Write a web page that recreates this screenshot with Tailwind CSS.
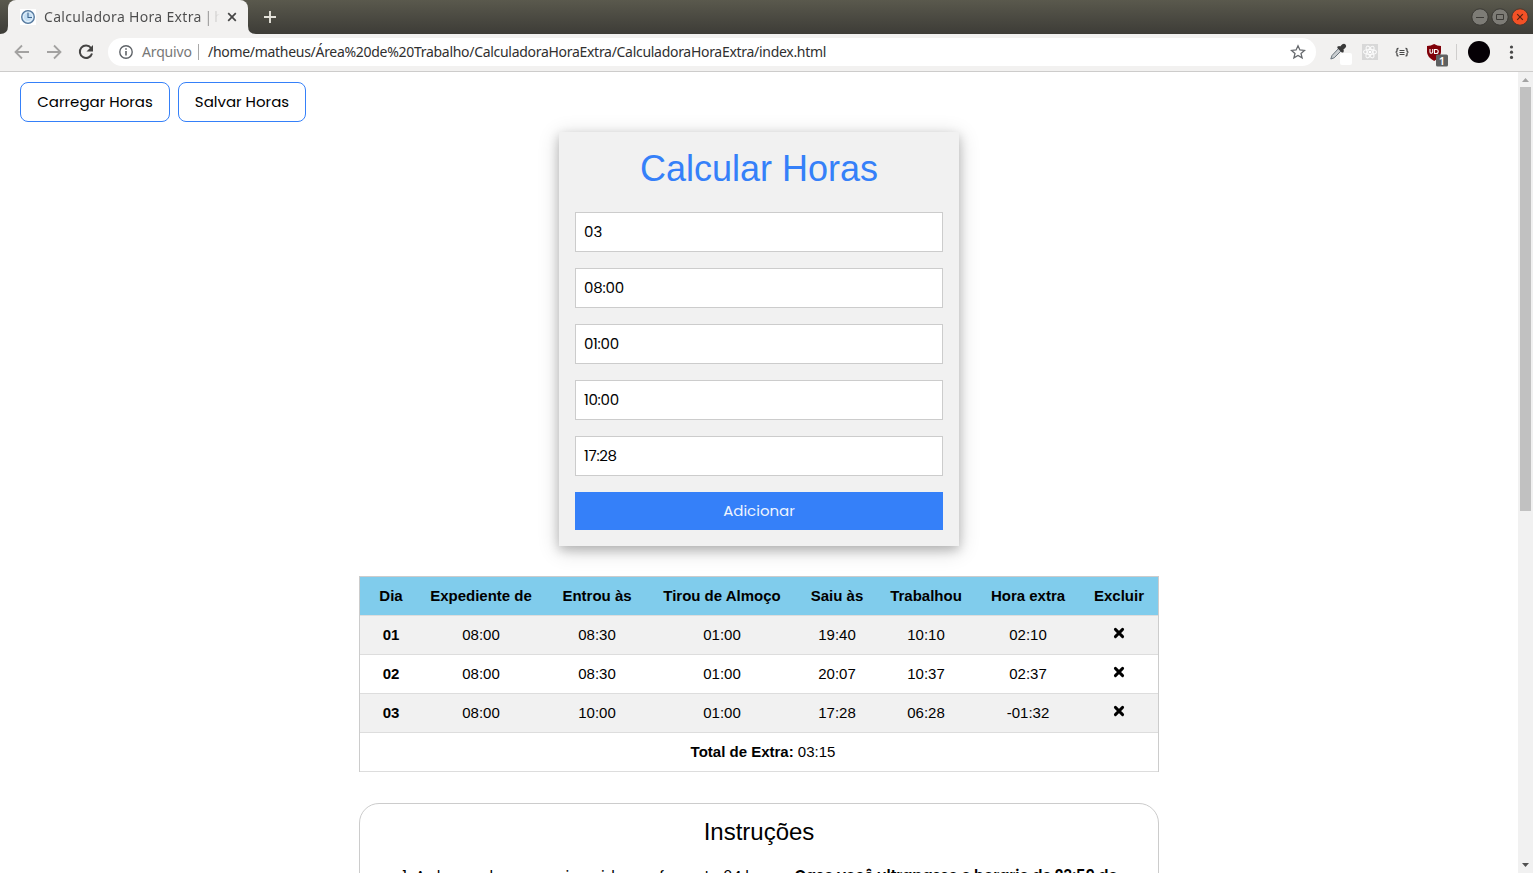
<!DOCTYPE html>
<html lang="pt-BR">
<head>
<meta charset="utf-8">
<title>Calculadora Hora Extra</title>
<script src="https://cdn.jsdelivr.net/npm/@tailwindcss/browser@4"></script>
</head>
<body class="flex h-[873px] w-[1533px] flex-col overflow-hidden bg-white font-['Liberation_Sans',sans-serif] text-[15px] leading-[22.5px] text-black">

<!-- Tab strip -->
<header class="flex h-[34px] shrink-0 justify-between bg-linear-to-b from-[#5a594d] to-[#3d3c37]">
  <div class="flex">
    <div class="flex w-2 items-end bg-transparent"><svg class="size-2" viewBox="0 0 8 8"><path d="M8 0v8H0Q8 8 8 0z" fill="#f2f1f0"/></svg></div>
    <div class="flex w-[240px] items-center rounded-t-lg bg-[#f2f1f0] pl-3">
      <svg class="size-4 shrink-0" viewBox="0 0 16 16"><path fill="#fff" d="M0 0h16v16H0z"/><circle cx="8" cy="8" r="6.3" fill="#c4def3" stroke="#54779c" stroke-width="1.3"/><circle cx="8" cy="8" r="4.6" fill="none" stroke="#e6f2fb" stroke-width="1"/><path d="M8 3.5V8.5h4" fill="none" stroke="#3f668f" stroke-width="1.1"/></svg>
      <div class="ml-2 w-[176px] overflow-hidden whitespace-nowrap bg-linear-to-r from-[#4c4c4c] from-88% to-transparent bg-clip-text font-['Noto_Sans',sans-serif] text-[14px] tracking-[0.32px] text-transparent">Calculadora Hora Extra<span class="tracking-[-0.8px]"> | h</span></div>
      <svg class="ml-[7px] size-[10px] shrink-0" viewBox="0 0 10 10"><path d="M1.2 1.2l7.6 7.6M8.800 1.200L1.200 8.800" stroke="#454545" stroke-width="1.7"/></svg>
    </div>
    <div class="flex w-2 items-end"><svg class="size-2" viewBox="0 0 8 8"><path d="M0 0v8h8Q0 8 0 0z" fill="#f2f1f0"/></svg></div>
    <svg class="ml-2 mt-[11px] size-3" viewBox="0 0 12 12"><path d="M6 0v12M0 6h12" stroke="#e4e2da" stroke-width="1.9"/></svg>
  </div>
  <div class="flex gap-[2px] pr-1 pt-2">
    <svg class="size-[18px]" viewBox="0 0 18 18"><circle cx="9" cy="9" r="8.2" fill="#7d7c76" stroke="#393833"/><path d="M5 9.5h8" stroke="#3c3b37"/></svg>
    <svg class="size-[18px]" viewBox="0 0 18 18"><circle cx="9" cy="9" r="8.2" fill="#7d7c76" stroke="#393833"/><path d="M5.500 6.500h7v5h-7z" fill="none" stroke="#3c3b37"/></svg>
    <svg class="size-[18px]" viewBox="0 0 18 18"><circle cx="9" cy="9" r="8.2" fill="#f35126" stroke="#48382e"/><path d="M6.200 6.200l5.600 5.600M11.800 6.200l-5.600 5.600" stroke="#522213" stroke-width="1.2"/></svg>
  </div>
</header>

<!-- Toolbar -->
<nav class="flex h-[38px] shrink-0 items-center border-b border-[#cdcccb] bg-[#f2f1f0] pb-px pl-[14px] pr-[14px]">
  <svg class="size-4" viewBox="0 0 16 16" fill="none" stroke="#a3a2a1" stroke-width="1.8"><path d="M15 8H2M8 1.500L1.500 8 8 14.500"/></svg>
  <svg class="ml-4 size-4" viewBox="0 0 16 16" fill="none" stroke="#a3a2a1" stroke-width="1.8"><path d="M1 8h13M8 1.500L14.500 8 8 14.500"/></svg>
  <svg class="ml-4 size-4" viewBox="0 0 16 16"><path d="M13 4A6.200 6.200 0 1 0 14 9.500" fill="none" stroke="#454443" stroke-width="2"/><path d="M15 1v6.500H8.500z" fill="#454443"/></svg>
  <div class="ml-[14px] flex h-7 w-[1208px] items-center rounded-full bg-white pl-[11px] pr-[10px] font-['Noto_Sans',sans-serif] text-[14px]">
    <svg class="size-[14px]" viewBox="0 0 14 14" fill="none" stroke="#5f6368"><circle cx="7" cy="7" r="6.200" stroke-width="1.400"/><path d="M7 6v4.500M7 3.300v1.500" stroke-width="1.600"/></svg>
    <span class="ml-[9px] w-[49px] whitespace-nowrap tracking-[-0.15px] text-[#777]">Arquivo</span>
    <span class="ml-[7px] h-4 w-px bg-[#a9a9a9]"></span>
    <span class="ml-[9px] whitespace-nowrap tracking-[-0.295px] text-[#303030]">/home/matheus/Área%20de%20Trabalho/CalculadoraHoraExtra/CalculadoraHoraExtra/index.html</span>
    <svg class="ml-auto size-4" viewBox="0 0 16 16"><path d="M8 1.800l1.900 4.200 4.600.4-3.500 3 1.100 4.500L8 11.500l-4.100 2.400L5 9.400l-3.500-3L6.100 6z" fill="none" stroke="#66696d" stroke-width="1.300"/></svg>
  </div>
  <svg class="ml-[14px] mt-1 h-[22px] w-[22px]" viewBox="0 0 22 22"><rect x="10" y="10" width="12" height="12" rx="2" fill="#fff"/><path d="M9 5L2 12.500.8 16l3.400-1.200L11.500 7.500z" fill="#c9cdd0" stroke="#69737b" stroke-width="1"/><path d="M7.500 3.500l1.800-.5.800.6 2.200-2.300q1.800-1.300 3.200.1t.1 3.200l-2.300 2.200.6.900-.6 1.700-1.500.2-4.500-4.500z" fill="#3a3a3a"/></svg>
  <svg class="ml-[10px] size-4" viewBox="0 0 16 16"><path fill="#d8d8d8" d="M0 0h16v16H0z"/><g fill="none" stroke="#fafafa" stroke-width="1.100"><ellipse cx="8" cy="8" rx="6.500" ry="2.500"/><ellipse cx="8" cy="8" rx="6.500" ry="2.500" transform="rotate(60 8 8)"/><ellipse cx="8" cy="8" rx="6.500" ry="2.500" transform="rotate(120 8 8)"/></g><circle cx="8" cy="8" r="1.300" fill="#fff"/></svg>
  <svg class="ml-4 size-4" viewBox="0 0 16 16" fill="none" stroke="#484848" stroke-width="1.300"><path d="M4.500 4.500H4Q3 4.500 3 5.500v1.200Q3 8 1.600 8.200 3 8.400 3 9.700v1.200q0 1 1 1h.5M11.500 4.500h.5q1 0 1 1v1.200Q13 8 14.400 8.200 13 8.400 13 9.700v1.200q0 1-1 1h-.5"/><path d="M5.500 6.500h5M5.500 8.500h5M5.500 10.500h5" stroke-width="1"/></svg>
  <svg class="ml-4 mt-[6px] h-[23px] w-[22px]" viewBox="0 0 22 23"><path d="M8.200 0Q11 2 15 2v6q0 5-6.800 9Q1 13 1 8V2q4 0 7.200-2z" fill="#800008"/><path d="M4 5v3q0 1.300 1.300 1.300T6.700 8V5M8.500 9.500V5.500h1.700q2 0 2 2t-2 2z" fill="none" stroke="#fff" stroke-width="1.100"/><rect x="10" y="10.500" width="12" height="12" rx="1.500" fill="#5f6161"/><text x="16" y="20.500" text-anchor="middle" font-family="Noto Sans" font-weight="600" font-size="11" fill="#fff">1</text></svg>
  <span class="ml-2 h-4 w-px bg-[#cfcecd]"></span>
  <span class="ml-[11px] size-[22px] rounded-full bg-[#050005]"></span>
  <svg class="ml-auto h-4 w-4" viewBox="0 0 16 16" fill="#484848"><circle cx="8.500" cy="3" r="1.600"/><circle cx="8.500" cy="8.200" r="1.600"/><circle cx="8.500" cy="13.400" r="1.600"/></svg>
</nav>

<div class="flex min-h-0 grow">
  <main class="flex w-[1518px] flex-col overflow-hidden">
    <div class="flex gap-2 pl-5 pt-[10px] font-[Poppins,Inter,sans-serif]">
      <button class="h-10 w-[150px] rounded-lg border border-[#3580f9] whitespace-nowrap">Carregar Horas</button>
      <button class="h-10 w-[128px] rounded-lg border border-[#3580f9] whitespace-nowrap">Salvar Horas</button>
    </div>

    <form class="mx-auto mt-[10px] flex h-[414px] w-[400px] shrink-0 flex-col gap-4 bg-[#f1f1f1] px-4 font-[Poppins,Inter,sans-serif] shadow-[0_4px_10px_0_rgba(0,0,0,0.2),0_4px_20px_0_rgba(0,0,0,0.19)]">
      <h1 class="mt-[10px] h-[54px] text-center font-['Liberation_Sans',sans-serif] text-[36px] leading-[54px] text-[#3580f9]">Calcular Horas</h1>
      <input class="h-10 shrink-0 border border-[#ccc] bg-white px-2 pb-[2px]" value="03">
      <input class="h-10 shrink-0 border border-[#ccc] bg-white px-2 pb-[2px] tracking-[-0.2px]" value="08:00">
      <input class="h-10 shrink-0 border border-[#ccc] bg-white px-2 pb-[2px] tracking-[-0.3px]" value="01:00">
      <input class="h-10 shrink-0 border border-[#ccc] bg-white px-2 pb-[2px] tracking-[-0.3px]" value="10:00">
      <input class="h-10 shrink-0 border border-[#ccc] bg-white px-2 pb-[2px] tracking-[-0.3px]" value="17:28">
      <button type="button" class="h-[38px] shrink-0 bg-[#3580f9] text-[#eef4fe]">Adicionar</button>
    </form>

    <table class="mx-auto mt-[30px] w-[800px] shrink-0 table-fixed border-separate border-spacing-0 border-x border-t border-[#ccc] text-center [&_td]:h-[39px] [&_td]:border-b [&_td]:border-[#ddd] [&_td]:p-0 [&_th]:h-[39px] [&_th]:border-b [&_th]:border-[#ddd] [&_th]:p-0 [&_svg]:mx-auto [&_svg]:mb-1 [&_svg]:size-3">
      <colgroup><col class="w-[54px]"><col class="w-[134px]"><col class="w-[98px]"><col class="w-[152px]"><col class="w-[78px]"><col class="w-[100px]"><col class="w-[104px]"><col class="w-[78px]"></colgroup>
      <tr class="bg-[#80ccec]"><th><span class="ml-2">Dia</span></th><th>Expediente de</th><th>Entrou às</th><th>Tirou de Almoço</th><th>Saiu às</th><th>Trabalhou</th><th>Hora extra</th><th>Excluir</th></tr>
      <tr class="bg-[#f1f1f1]"><th><span class="ml-2">01</span></th><td>08:00</td><td>08:30</td><td>01:00</td><td>19:40</td><td>10:10</td><td>02:10</td><td><svg viewBox="0 0 12 12"><path d="M2.400 2.400l7.200 7.200M9.600 2.400l-7.200 7.200" stroke="#000" stroke-width="2.900" stroke-linecap="round"/></svg></td></tr>
      <tr><th><span class="ml-2">02</span></th><td>08:00</td><td>08:30</td><td>01:00</td><td>20:07</td><td>10:37</td><td>02:37</td><td><svg viewBox="0 0 12 12"><path d="M2.400 2.400l7.200 7.200M9.600 2.400l-7.200 7.200" stroke="#000" stroke-width="2.900" stroke-linecap="round"/></svg></td></tr>
      <tr class="bg-[#f1f1f1]"><th><span class="ml-2">03</span></th><td>08:00</td><td>10:00</td><td>01:00</td><td>17:28</td><td>06:28</td><td>-01:32</td><td><svg viewBox="0 0 12 12"><path d="M2.400 2.400l7.200 7.200M9.600 2.400l-7.200 7.200" stroke="#000" stroke-width="2.900" stroke-linecap="round"/></svg></td></tr>
      <tr><td colspan="8"><span class="ml-2"><b>Total de Extra:</b> 03:15</span></td></tr>
    </table>

    <section class="mx-auto mt-[31px] h-[300px] w-[800px] shrink-0 rounded-[20px] border border-[#ccc] text-center">
      <h2 class="mt-[10px] text-2xl leading-9">Instruções</h2>
      <p class="mt-[15px] whitespace-nowrap pl-[2px] font-[Poppins,Inter,sans-serif]"><span class="tracking-[-0.09px]">1-As horas devem ser inseridas no formato 24 horas.</span> <b class="font-semibold tracking-[-0.12px]">Caso você ultrapasse o horario de 23:59 do</b></p>
    </section>
  </main>

  <!-- Scrollbar -->
  <aside class="flex w-[15px] flex-col items-center bg-[#f1f1f1]">
    <svg class="h-[15px] w-[15px] shrink-0" viewBox="0 0 15 15"><path d="M4 10h7L7.500 6z" fill="#a3a3a3"/></svg>
    <div class="h-[424px] w-[11px] bg-[#c1c1c1]"></div>
    <svg class="mt-auto h-[15px] w-[15px] shrink-0" viewBox="0 0 15 15"><path d="M4 5h7L7.500 9z" fill="#505050"/></svg>
  </aside>
</div>
</body>
</html>
